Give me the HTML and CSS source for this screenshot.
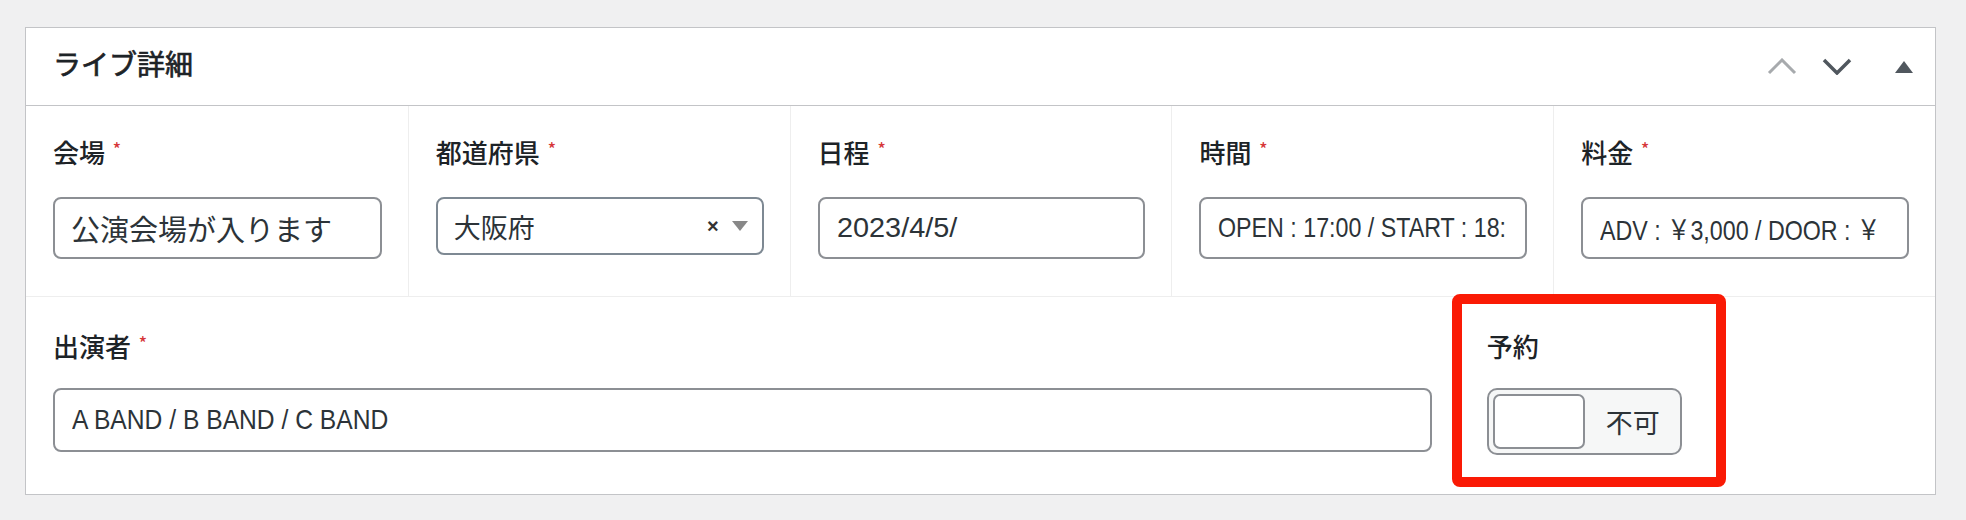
FILE: index.html
```html
<!DOCTYPE html>
<html lang="ja">
<head>
    <meta charset="UTF-8">
    <title>ライブ詳細</title>
    <link rel="stylesheet" href="styles.css">
</head>
<body>
    <div class="postbox">
        <div class="postbox-header">
            <h2>ライブ詳細</h2>
            <div class="handle-actions">
                <svg class="icon-up" width="30" height="17" viewBox="0 0 30 17">
                    <polyline points="2,15 15,2 28,15" fill="none" stroke="#a7aaad" stroke-width="3"/>
                </svg>
                <svg class="icon-down" width="30" height="17" viewBox="0 0 30 17">
                    <polyline points="2,2 15,15 28,2" fill="none" stroke="#50575e" stroke-width="3.5"/>
                </svg>
                <svg class="icon-toggle" width="18" height="12" viewBox="0 0 18 12">
                    <polygon points="9,0 18,12 0,12" fill="#50575e"/>
                </svg>
            </div>
        </div>

        <div class="fields">
            <div class="field col-20 first-row">
                <label>会場 <span class="req">*</span></label>
                <div class="input jp-big">公演会場が入ります</div>
            </div>
            <div class="field col-20 first-row">
                <label>都道府県 <span class="req">*</span></label>
                <div class="select">
                    <span class="select-value">大阪府</span>
                    <span class="select-clear">×</span>
                    <span class="select-arrow"></span>
                </div>
            </div>
            <div class="field col-20 first-row">
                <label>日程 <span class="req">*</span></label>
                <div class="input"><span class="cond wide">2023/4/5/</span></div>
            </div>
            <div class="field col-20 first-row">
                <label>時間 <span class="req">*</span></label>
                <div class="input"><span class="cond">OPEN : 17:00 / START : 18:</span></div>
            </div>
            <div class="field col-20 first-row">
                <label>料金 <span class="req">*</span></label>
                <div class="input"><span class="cond">ADV : ￥3,000 / DOOR : ￥</span></div>
            </div>

            <div class="field col-75 second-row">
                <label>出演者 <span class="req">*</span></label>
                <div class="input input-tall"><span class="cond medium">A BAND / B BAND / C BAND</span></div>
            </div>
            <div class="field col-25 second-row no-divider">
                <label>予約</label>
                <div class="switch">
                    <span class="switch-slider"></span>
                    <span class="switch-label">不可</span>
                </div>
                <div class="highlight"></div>
            </div>
        </div>
    </div>
</body>
</html>
```

FILE: styles.css
```css
* {
    box-sizing: border-box;
    margin: 0;
    padding: 0;
}

body {
    font-family: "Noto Sans CJK JP", sans-serif;
    background: #f0f0f1;
    color: #1d2327;
    padding: 27px 0 0 25px;
    height: 520px;
    overflow: hidden;
}

.postbox {
    width: 1911px;
    background: #fff;
    border: 1px solid #c3c4c7;
}

.postbox-header {
    height: 78px;
    border-bottom: 1px solid #c3c4c7;
    display: flex;
    align-items: center;
    padding: 0 22px 0 27px;
}

.postbox-header h2 {
    font-size: 28px;
    font-weight: 400;
    -webkit-text-stroke: 0.7px #1d2327;
    color: #1d2327;
    margin-bottom: 8px;
}

.handle-actions {
    margin-left: auto;
    display: flex;
    align-items: center;
}

.icon-up {
    margin-right: 25px;
}

.icon-down {
    margin-right: 43px;
}

.fields {
    display: flex;
    flex-wrap: wrap;
}

.field {
    border-left: 1px solid #eeeeee;
    padding: 0 26px 0 27px;
    position: relative;
}

.field:first-child,
.col-75 {
    border-left: 0;
    padding-left: 27px;
}

.col-20 {
    width: 20%;
}

.col-75 {
    width: 75%;
}

.col-25 {
    width: 25%;
}

.no-divider {
    border-left: 0;
    padding-left: 29px;
}

.first-row {
    padding-top: 28px;
    padding-bottom: 37px;
}

.second-row {
    border-top: 1px solid #eeeeee;
    padding-top: 31px;
    padding-bottom: 39px;
}

.field label {
    display: block;
    font-size: 26px;
    line-height: 36px;
    height: 36px;
    font-weight: 500;
    color: #1d2327;
    margin-bottom: 27px;
}

.second-row label {
    margin-bottom: 24px;
}

.req {
    color: #d63638;
    font-size: 17px;
    position: relative;
    top: -7px;
    margin-left: 2px;
}

.input {
    height: 62px;
    border: 2px solid #8c8f94;
    border-radius: 8px;
    padding: 0 17px;
    display: flex;
    align-items: center;
    white-space: nowrap;
    overflow: hidden;
    font-family: "Liberation Sans", "Noto Sans CJK JP", sans-serif;
    font-size: 28px;
    color: #2c3338;
}

.cond {
    display: inline-block;
    transform: scaleX(0.83);
    transform-origin: left center;
}

.cond.wide {
    transform: scaleX(1.03);
}

.cond.medium {
    transform: scaleX(0.88);
}

.input.jp-big {
    font-family: "Noto Sans CJK JP", sans-serif;
    font-size: 29px;
    padding-left: 16px;
}

.input-tall {
    height: 64px;
}

.select {
    height: 58px;
    border: 2px solid #7e8993;
    border-radius: 8px;
    display: flex;
    align-items: center;
    padding: 0 14px 0 16px;
    font-size: 27px;
    color: #2c3338;
}

.select-value {
    flex: 1;
}

.select-clear {
    font-family: "Liberation Sans", sans-serif;
    font-size: 20px;
    font-weight: bold;
    color: #333;
    margin-right: 13px;
}

.select-arrow {
    width: 0;
    height: 0;
    border-left: 8px solid transparent;
    border-right: 8px solid transparent;
    border-top: 10px solid #888;
}

.switch {
    width: 195px;
    height: 67px;
    border: 2px solid #8c8f94;
    border-radius: 10px;
    background: #f6f7f7;
    padding: 4px;
    display: flex;
    align-items: center;
}

.switch-slider {
    width: 92px;
    height: 55px;
    background: #fff;
    border: 2px solid #8c8f94;
    border-radius: 7px;
}

.switch-label {
    margin-left: 21px;
    font-size: 27px;
    color: #2c3338;
}

.highlight {
    position: absolute;
    left: -6px;
    top: -3px;
    width: 274px;
    height: 193px;
    border: 10px solid #fa1a05;
    border-radius: 8px;
}
```
